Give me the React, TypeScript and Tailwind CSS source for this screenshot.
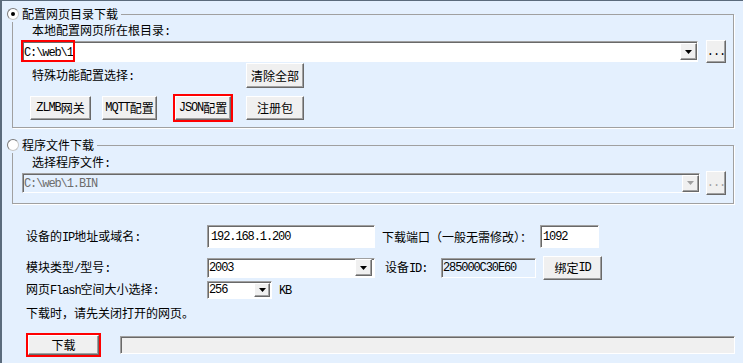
import React from "react";

const raised =
  "flex items-center justify-center bg-[#f0f0f0] border border-t-white border-l-white border-r-[#696969] border-b-[#696969] shadow-[inset_-1px_-1px_0_#a0a0a0]";
const sunk =
  "border border-t-[#a0a0a0] border-l-[#a0a0a0] border-r-white border-b-white shadow-[inset_1px_1px_0_#696969]";

// latin runs get a narrow mono face, like the half-width glyphs of the original
function Mix({ text }: { text: string }) {
  const parts = text.split(/([\x20-\x7e]+)/).filter((p) => p !== "");
  return (
    <>
      {parts.map((p, i) =>
        /^[\x20-\x7e]+$/.test(p) ? (
          <span
            key={i}
            className="font-['Liberation_Mono',monospace] text-[12px] tracking-[-1.1px]"
          >
            {p}
          </span>
        ) : (
          <span key={i}>{p}</span>
        )
      )}
    </>
  );
}

function Radio({ checked }: { checked?: boolean }) {
  return (
    <span className="inline-flex h-[12px] w-[12px] items-center justify-center rounded-full border border-t-[#7a7a7a] border-l-[#7a7a7a] border-r-[#c8c8c8] border-b-[#c8c8c8] bg-white">
      {checked && <span className="h-[4px] w-[4px] rounded-full bg-black" />}
    </span>
  );
}

function Arrow({ disabled, small }: { disabled?: boolean; small?: boolean }) {
  return (
    <div
      className={`${raised} ${small ? "h-[14px] w-[16px]" : "h-[17px] w-[17px]"}`}
    >
      <svg width="7" height="4" viewBox="0 0 7 4">
        <path d="M0 0h7L3.5 4z" fill={disabled ? "#a0a0a0" : "#000"} />
      </svg>
    </div>
  );
}

export default function App() {
  return (
    <div className="h-[363px] w-[743px] overflow-hidden border-l-2 border-t border-[#5b6b7c] bg-[#e4f0fe] pt-[5px] font-['Noto_Sans_CJK_SC',sans-serif] text-[12px] leading-4 text-black">
      {/* 配置网页目录下载 */}
      <fieldset className="ml-[10px] w-[722px] border border-[#a0a0a0] pb-[5px] shadow-[1px_1px_0_#fff]">
        <legend className="-ml-[6px] pr-[3px]">
          <span className="flex h-4 items-center gap-[3px]">
            <Radio checked />
            <span>配置网页目录下载</span>
          </span>
        </legend>

        <div className="ml-[19px] h-4">
          <Mix text="本地配置网页所在根目录:" />
        </div>

        <div className="mt-[2px] flex h-[23px] items-center">
          <div
            className={`relative ml-[9px] flex h-[21px] w-[676px] items-center justify-between bg-white ${sunk}`}
          >
            <span className="pl-[1px]">
              <Mix text="C:\web\1" />
            </span>
            <Arrow />
            <div className="absolute -left-[2px] -top-[2px] h-[22px] w-[54px] border-2 border-[#ff0000]" />
          </div>
          <div className={`ml-[8px] h-[23px] w-[20px] ${raised}`}>
            <Mix text="..." />
          </div>
        </div>

        <div className="flex h-[25px] items-center">
          <div className="ml-[19px] w-[214px]">
            <Mix text="特殊功能配置选择:" />
          </div>
          <button className={`h-[25px] w-[58px] ${raised}`}>清除全部</button>
        </div>

        <div className="mt-[6px] flex h-[28px] items-center">
          <button className={`ml-[17px] h-[24px] w-[61px] ${raised}`}>
            <Mix text="ZLMB网关" />
          </button>
          <button className={`ml-[11px] h-[24px] w-[55px] ${raised}`}>
            <Mix text="MQTT配置" />
          </button>
          <div className="ml-[16px] h-[28px] w-[60px] border-2 border-[#ff0000]">
            <button className={`h-full w-full ${raised}`}>
              <Mix text="JSON配置" />
            </button>
          </div>
          <button className={`ml-[13px] h-[24px] w-[58px] ${raised}`}>注册包</button>
        </div>
      </fieldset>

      {/* 程序文件下载 */}
      <fieldset className="ml-[10px] mt-[9px] w-[722px] border border-[#a0a0a0] pb-[8px] shadow-[1px_1px_0_#fff]">
        <legend className="-ml-[6px] pr-[3px]">
          <span className="flex h-4 items-center gap-[3px]">
            <Radio />
            <span>程序文件下载</span>
          </span>
        </legend>

        <div className="ml-[19px] mt-[1px] h-4">
          <Mix text="选择程序文件:" />
        </div>

        <div className="mt-[1px] flex h-[24px] items-center">
          <div
            className={`ml-[9px] flex h-[20px] w-[678px] items-center justify-between text-[#6d6d6d] ${sunk}`}
          >
            <span className="pl-[1px]">
              <Mix text="C:\web\1.BIN" />
            </span>
            <Arrow disabled />
          </div>
          <div className={`ml-[6px] h-[24px] w-[20px] text-[#a0a0a0] ${raised}`}>
            <Mix text="..." />
          </div>
        </div>
      </fieldset>

      {/* 设备参数 */}
      <div className="mt-[21px] flex h-[23px] items-center">
        <div className="w-[205px] pl-[24px]">
          <Mix text="设备的IP地址或域名:" />
        </div>
        <div className={`flex h-[23px] w-[168px] items-center bg-white pl-[3px] ${sunk}`}>
          <Mix text="192.168.1.200" />
        </div>
        <div className="ml-[7px] w-[158px]">下载端口（一般无需修改）：</div>
        <div className={`flex h-[23px] w-[59px] items-center bg-white pl-[2px] ${sunk}`}>
          <Mix text="1092" />
        </div>
      </div>

      <div className="mt-[7px] flex h-[25px] items-center">
        <div className="w-[205px] pl-[24px]">
          <Mix text="模块类型/型号:" />
        </div>
        <div
          className={`flex h-[20px] w-[168px] items-center justify-between bg-white pl-[1px] pr-[2px] ${sunk}`}
        >
          <Mix text="2003" />
          <Arrow />
        </div>
        <div className="ml-[10px] w-[56px]">
          <Mix text="设备ID:" />
        </div>
        <div className={`flex h-[20px] w-[95px] items-center pl-[1px] ${sunk}`}>
          <Mix text="285000C30E60" />
        </div>
        <button className={`ml-[7px] h-[24px] w-[59px] ${raised}`}>
          <Mix text="绑定ID" />
        </button>
      </div>

      <div className="mt-[1px] flex h-[18px] items-center">
        <div className="w-[205px] pl-[24px]">
          <Mix text="网页Flash空间大小选择:" />
        </div>
        <div
          className={`flex h-[18px] w-[65px] items-center justify-between bg-white pl-[1px] pr-[1px] ${sunk}`}
        >
          <Mix text="256" />
          <Arrow small />
        </div>
        <div className="ml-[7px]">
          <Mix text="KB" />
        </div>
      </div>

      <div className="mt-[6px] h-4 pl-[24px]">下载时，请先关闭打开的网页。</div>

      <div className="mt-[12px] flex h-[24px] items-center">
        <div className="ml-[24px] h-[24px] w-[75px] border-2 border-[#ff0000]">
          <button className={`h-full w-full ${raised}`}>下载</button>
        </div>
        <div className={`ml-[19px] h-[18px] w-[615px] bg-[#f0f0f0] ${sunk}`} />
      </div>
    </div>
  );
}
